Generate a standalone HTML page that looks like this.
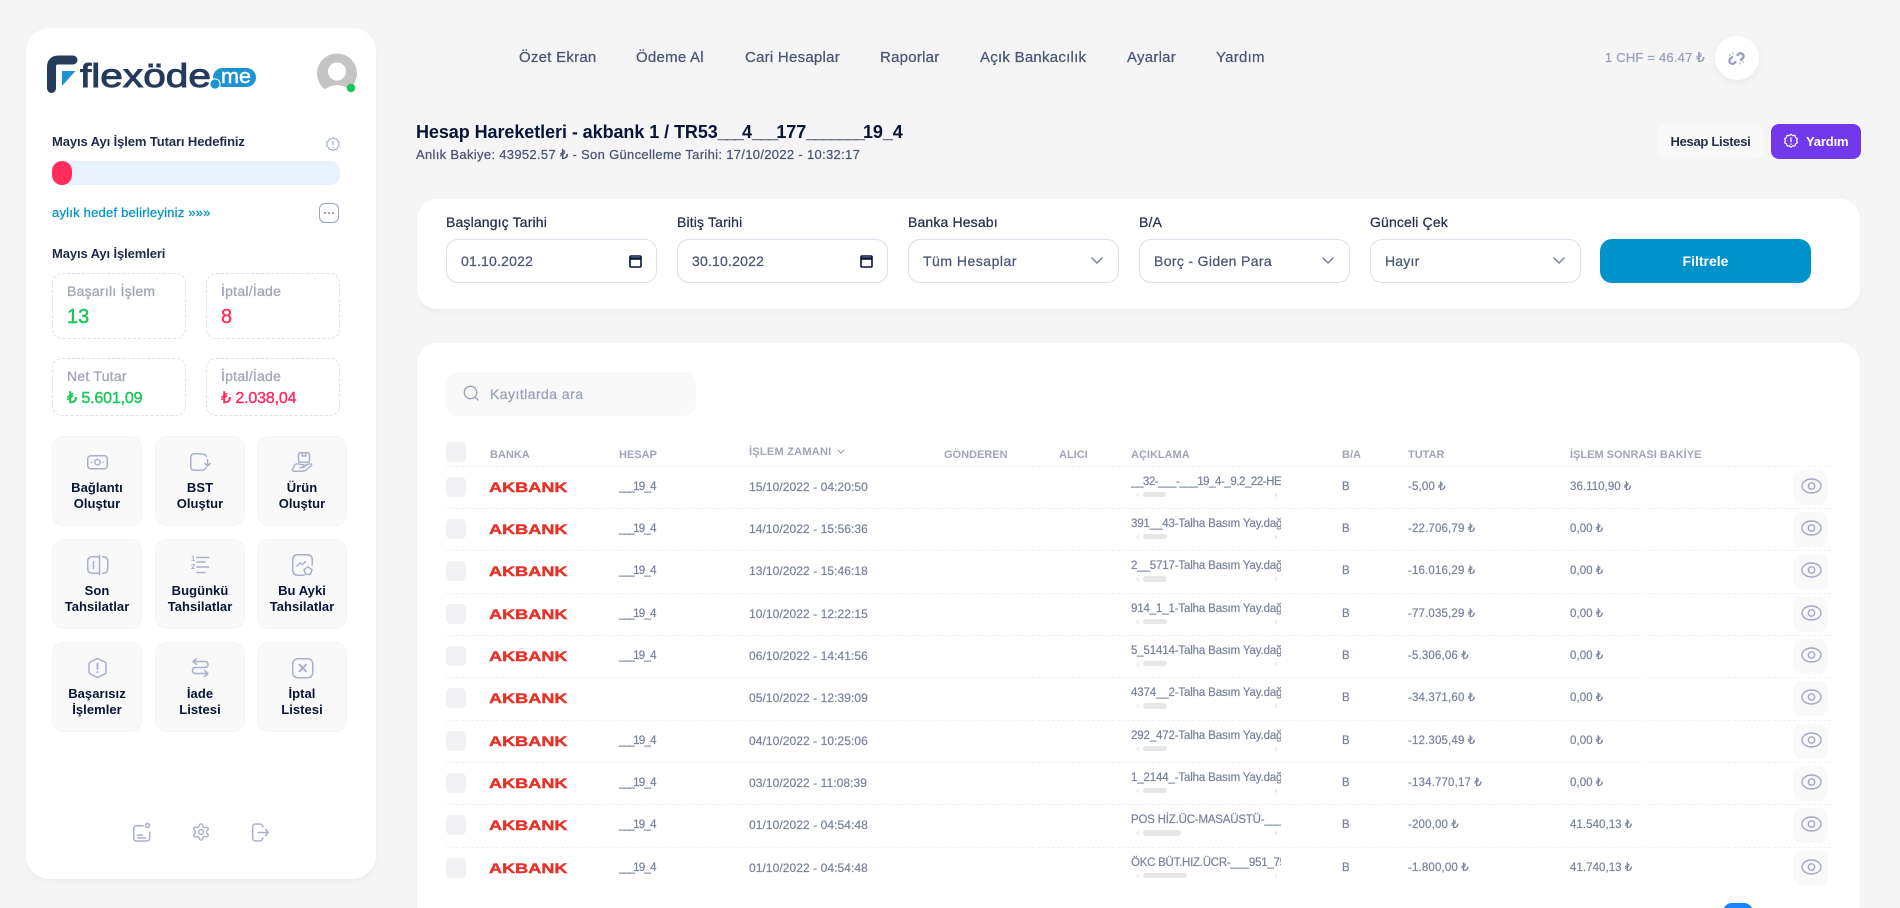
<!DOCTYPE html>
<html lang="tr"><head><meta charset="utf-8"><title>Hesap Hareketleri</title>
<style>
*{box-sizing:border-box;margin:0;padding:0}
html,body{width:1900px;height:908px;overflow:hidden;background:#F5F5F5;font-family:"Liberation Sans","DejaVu Sans",sans-serif;position:relative}
.a{position:absolute;white-space:nowrap}
.m{-webkit-text-stroke:.25px currentColor}
.card{position:absolute;background:#fff;box-shadow:0 3px 4px rgba(0,0,0,.03)}
.n{position:absolute;top:48px;line-height:20px;font-size:15px;color:#4B5675;letter-spacing:.25px;white-space:nowrap;-webkit-text-stroke:.25px currentColor}
.st{position:absolute;border:1px dashed #E0E0EC;border-radius:10px;width:134px}
.sl{position:absolute;left:14px;font-size:14px;color:#A1A5B7;line-height:18px;white-space:nowrap;letter-spacing:.25px;-webkit-text-stroke:.3px currentColor}
.sv{position:absolute;left:14px;white-space:nowrap;line-height:24px;-webkit-text-stroke:.4px currentColor}
.tile{position:absolute;width:90px;height:90px;background:#F9F9F9;border:1px solid #F4F4F6;border-radius:12px;text-align:center;font-size:13px;font-weight:700;line-height:16px;color:#071437;padding-top:43px;letter-spacing:.05px}
.lb{position:absolute;top:213px;font-size:14px;line-height:18px;color:#252F4A;letter-spacing:.15px;white-space:nowrap;-webkit-text-stroke:.25px currentColor}
.inp{position:absolute;top:239px;height:44px;width:211px;border:1px solid #DBDFE9;border-radius:12px;background:#fff;font-size:14px;line-height:42px;padding-left:14px;color:#4B5675;letter-spacing:.2px;-webkit-text-stroke:.25px currentColor}
.th{position:absolute;top:447px;font-size:11px;font-weight:700;line-height:16px;color:#A1A5B7;white-space:nowrap}
.r{position:absolute;left:446px;width:1385px;height:43px;border-top:1px dashed #F1F1F4}
.r>*{position:absolute}
.cb{left:0;top:10px;width:20px;height:20px;background:#F1F1F4;border-radius:5px}
.ak{left:43px;top:15px}
.t{top:0;line-height:40px;font-size:11.5px;color:#78829D;white-space:nowrap;-webkit-text-stroke:.2px currentColor}
.h{left:173px;letter-spacing:-.7px}
.h b{font-weight:400;letter-spacing:-1.7px}
.d{left:303px;font-size:12px;letter-spacing:.07px}
.x{left:685px;top:7px;width:150px;overflow:hidden;white-space:nowrap;font-size:11.5px;line-height:16px;color:#78829D;letter-spacing:-.15px;-webkit-text-stroke:.2px currentColor}
.sb{left:697px;top:25px;height:5.5px;border-radius:3px;background:#E6E6E9}
.la{top:25px;width:0;height:0;border:3px solid transparent}
.ba{left:896px}.tu{left:962px;letter-spacing:.15px}.bk{left:1124px;letter-spacing:.05px}
.eb{left:1347px;top:3px;width:35px;height:35px;background:#F9F9F9;border-radius:9px}
.eb svg{position:absolute;left:8px;top:8px}
.u{letter-spacing:-1.9px}
</style></head><body>

<svg width="0" height="0" style="position:absolute"><symbol id="eye" viewBox="0 0 21 16"><ellipse cx="10.5" cy="8" rx="9.5" ry="7" fill="none" stroke="#A0A8C6" stroke-width="1.4"/><circle cx="10.5" cy="8" r="3.2" fill="none" stroke="#A0A8C6" stroke-width="1.4"/></symbol></svg>

<div class="card" style="left:26px;top:28px;width:350px;height:851px;border-radius:24px"></div>

<svg class="a" style="left:40px;top:45px" width="230" height="60" viewBox="40 45 230 60">
<path d="M51.5 88.5V67Q51.5 60 58.5 60H73" fill="none" stroke="#253B5B" stroke-width="9" stroke-linecap="round"/>
<polygon points="62,71 75.5,71 62,86" fill="#1E93D1"/>
<text x="80" y="87" font-family="Liberation Sans" font-size="33" fill="#253B5B" stroke="#253B5B" stroke-width=".9" textLength="131" lengthAdjust="spacingAndGlyphs">flexöde</text>
<rect x="213" y="68" width="43" height="19" rx="9.5" fill="#1E93D1"/>
<circle cx="215" cy="84" r="5.6" fill="#fff"/>
<circle cx="215" cy="84" r="4.6" fill="#1E93D1"/>
<text x="221" y="83" font-family="Liberation Sans" font-size="20" fill="#fff" stroke="#fff" stroke-width=".4" textLength="30" lengthAdjust="spacingAndGlyphs">me</text>
</svg>

<svg class="a" style="left:315px;top:50px" width="46" height="46" viewBox="315 50 46 46">
<circle cx="337" cy="73.5" r="20" fill="#C4C4C4"/>
<circle cx="337" cy="71.5" r="9" fill="#fff"/>
<path d="M324 90Q337 80 350 90L346 94H328Z" fill="#fff"/>
<circle cx="351" cy="88" r="4.2" fill="#17C653"/>
</svg>

<div class="a" style="left:52px;top:133px;font-size:13px;font-weight:700;line-height:18px;color:#1E2A4A;letter-spacing:-.1px">Mayıs Ayı İşlem Tutarı Hedefiniz</div>
<div class="a" style="left:52px;top:161px;width:288px;height:24px;background:#E8F1FE;border-radius:10px"></div>
<div class="a" style="left:52px;top:161px;width:20px;height:24px;background:#FF2D5B;border-radius:10px"></div>
<div class="a m" style="left:52px;top:204px;font-size:13px;line-height:18px;color:#0093CB;letter-spacing:.22px">aylık hedef belirleyiniz »»»</div>
<div class="a" style="left:319px;top:203px;width:20px;height:20px;border:1.6px solid #98A1C2;border-radius:6px"></div>
<div class="a" style="left:52px;top:245px;font-size:13px;font-weight:700;line-height:18px;color:#1E2A4A;letter-spacing:-.11px">Mayıs Ayı İşlemleri</div>

<div class="st" style="left:52px;top:273px;height:66px"><div class="sl" style="top:8px">Başarılı İşlem</div><div class="sv" style="top:31px;font-size:20px;color:#17C653">13</div></div>
<div class="st" style="left:206px;top:273px;height:66px"><div class="sl" style="top:8px">İptal/İade</div><div class="sv" style="top:31px;font-size:20px;color:#FF2D5B">8</div></div>
<div class="st" style="left:52px;top:358px;height:58px"><div class="sl" style="top:8px">Net Tutar</div><div class="sv" style="top:28px;font-size:16px;color:#17C653;letter-spacing:-.15px">₺ 5.601,09</div></div>
<div class="st" style="left:206px;top:358px;height:58px"><div class="sl" style="top:8px">İptal/İade</div><div class="sv" style="top:28px;font-size:16px;color:#FF2D5B;letter-spacing:-.15px">₺ 2.038,04</div></div>

<div class="tile" style="left:52px;top:436px">Bağlantı<br>Oluştur</div>
<div class="tile" style="left:155px;top:436px">BST<br>Oluştur</div>
<div class="tile" style="left:257px;top:436px">Ürün<br>Oluştur</div>
<div class="tile" style="left:52px;top:539px">Son<br>Tahsilatlar</div>
<div class="tile" style="left:155px;top:539px">Bugünkü<br>Tahsilatlar</div>
<div class="tile" style="left:257px;top:539px">Bu Ayki<br>Tahsilatlar</div>
<div class="tile" style="left:52px;top:642px">Başarısız<br>İşlemler</div>
<div class="tile" style="left:155px;top:642px">İade<br>Listesi</div>
<div class="tile" style="left:257px;top:642px">İptal<br>Listesi</div>

<div class="n" style="left:519px">Özet Ekran</div>
<div class="n" style="left:636px">Ödeme Al</div>
<div class="n" style="left:745px">Cari Hesaplar</div>
<div class="n" style="left:880px">Raporlar</div>
<div class="n" style="left:980px">Açık Bankacılık</div>
<div class="n" style="left:1127px">Ayarlar</div>
<div class="n" style="left:1216px">Yardım</div>

<div class="a m" style="left:1605px;top:49px;font-size:13px;line-height:18px;color:#99A1B7;letter-spacing:.2px">1 CHF = 46.47 ₺</div>
<div class="a" style="left:1715px;top:36px;width:44px;height:44px;background:#fff;border-radius:50%;box-shadow:0 3px 8px rgba(0,0,0,.05)"></div>

<div class="a" style="left:416px;top:121px;font-size:18px;font-weight:700;line-height:22px;color:#071437;letter-spacing:-.07px">Hesap Hareketleri - akbank 1 / TR53<span class="u">___</span>4<span class="u">___</span>177<span class="u">_______</span>19_4</div>
<div class="a m" style="left:416px;top:146px;font-size:13px;line-height:18px;color:#4B5675;letter-spacing:.32px">Anlık Bakiye: 43952.57 ₺ - Son Güncelleme Tarihi: 17/10/2022 - 10:32:17</div>

<div class="a" style="left:1657px;top:124px;width:107px;height:35px;background:#F9F9F9;border-radius:8px;text-align:center;font-size:13px;font-weight:700;line-height:35px;color:#252F4A;letter-spacing:-.3px">Hesap Listesi</div>
<div class="a" style="left:1771px;top:124px;width:90px;height:35px;background:#7239EA;border-radius:8px;font-size:13px;font-weight:700;line-height:35px;color:#fff;padding-left:35px;letter-spacing:-.15px">Yardım</div>

<div class="card" style="left:417px;top:199px;width:1443px;height:110px;border-radius:20px"></div>
<div class="lb" style="left:446px">Başlangıç Tarihi</div>
<div class="lb" style="left:677px">Bitiş Tarihi</div>
<div class="lb" style="left:908px">Banka Hesabı</div>
<div class="lb" style="left:1139px">B/A</div>
<div class="lb" style="left:1370px">Günceli Çek</div>
<div class="inp" style="left:446px">01.10.2022</div>
<div class="inp" style="left:677px">30.10.2022</div>
<div class="inp" style="left:908px;letter-spacing:.5px">Tüm Hesaplar</div>
<div class="inp" style="left:1139px;letter-spacing:.35px">Borç - Giden Para</div>
<div class="inp" style="left:1370px">Hayır</div>
<div class="a" style="left:1600px;top:239px;width:211px;height:44px;background:#0093CB;border-radius:12px;text-align:center;color:#fff;font-size:14px;font-weight:700;line-height:44px">Filtrele</div>

<div class="card" style="left:417px;top:343px;width:1443px;height:600px;border-radius:20px"></div>
<div class="a m" style="left:446px;top:372px;width:250px;height:44px;background:#F9F9F9;border-radius:12px;font-size:14px;line-height:44px;padding-left:44px;color:#99A1B7;letter-spacing:.45px">Kayıtlarda ara</div>

<i class="a" style="left:446px;top:442px;width:20px;height:20px;background:#F1F1F4;border-radius:5px"></i>
<div class="th" style="left:490px">BANKA</div>
<div class="th" style="left:619px">HESAP</div>
<div class="th" style="left:749px;top:444px;letter-spacing:.25px">İŞLEM ZAMANI</div>
<div class="th" style="left:944px">GÖNDEREN</div>
<div class="th" style="left:1059px">ALICI</div>
<div class="th" style="left:1131px">AÇIKLAMA</div>
<div class="th" style="left:1342px">B/A</div>
<div class="th" style="left:1408px">TUTAR</div>
<div class="th" style="left:1570px">İŞLEM SONRASI BAKİYE</div>

<div class="r" style="top:465.5px"><i class="cb"></i><svg class="ak" width="80" height="11"><text x="0" y="10" font-family="Liberation Sans" font-weight="700" font-size="14" fill="#E53329" textLength="78.5" lengthAdjust="spacingAndGlyphs" stroke="#E53329" stroke-width=".4">AKBANK</text></svg><span class="t h"><b>___</b>19_4</span><span class="t d">15/10/2022 - 04:20:50</span><div class="x" style="letter-spacing:-.45px">__32-___-___19_4-_9.2_22-HESAP</div><i class="la" style="left:687px;border-right-color:#EEE"></i><div class="sb" style="width:23px"></div><i class="la" style="left:829px;border-left-color:#EEE"></i><span class="t ba">B</span><span class="t tu">-5,00 ₺</span><span class="t bk">36.110,90 ₺</span><div class="eb"><svg width="21" height="16"><use href="#eye"/></svg></div></div>

<div class="r" style="top:507.8px"><i class="cb"></i><svg class="ak" width="80" height="11"><text x="0" y="10" font-family="Liberation Sans" font-weight="700" font-size="14" fill="#E53329" textLength="78.5" lengthAdjust="spacingAndGlyphs" stroke="#E53329" stroke-width=".4">AKBANK</text></svg><span class="t h"><b>___</b>19_4</span><span class="t d">14/10/2022 - 15:56:36</span><div class="x">391__43-Talha Basım Yay.dağıtım</div><i class="la" style="left:687px;border-right-color:#EEE"></i><div class="sb" style="width:24px"></div><i class="la" style="left:829px;border-left-color:#EEE"></i><span class="t ba">B</span><span class="t tu">-22.706,79 ₺</span><span class="t bk">0,00 ₺</span><div class="eb"><svg width="21" height="16"><use href="#eye"/></svg></div></div>

<div class="r" style="top:550.2px"><i class="cb"></i><svg class="ak" width="80" height="11"><text x="0" y="10" font-family="Liberation Sans" font-weight="700" font-size="14" fill="#E53329" textLength="78.5" lengthAdjust="spacingAndGlyphs" stroke="#E53329" stroke-width=".4">AKBANK</text></svg><span class="t h"><b>___</b>19_4</span><span class="t d">13/10/2022 - 15:46:18</span><div class="x">2__5717-Talha Basım Yay.dağıtım</div><i class="la" style="left:687px;border-right-color:#EEE"></i><div class="sb" style="width:24px"></div><i class="la" style="left:829px;border-left-color:#EEE"></i><span class="t ba">B</span><span class="t tu">-16.016,29 ₺</span><span class="t bk">0,00 ₺</span><div class="eb"><svg width="21" height="16"><use href="#eye"/></svg></div></div>

<div class="r" style="top:592.5px"><i class="cb"></i><svg class="ak" width="80" height="11"><text x="0" y="10" font-family="Liberation Sans" font-weight="700" font-size="14" fill="#E53329" textLength="78.5" lengthAdjust="spacingAndGlyphs" stroke="#E53329" stroke-width=".4">AKBANK</text></svg><span class="t h"><b>___</b>19_4</span><span class="t d">10/10/2022 - 12:22:15</span><div class="x">914_1_1-Talha Basım Yay.dağıtım</div><i class="la" style="left:687px;border-right-color:#EEE"></i><div class="sb" style="width:24px"></div><i class="la" style="left:829px;border-left-color:#EEE"></i><span class="t ba">B</span><span class="t tu">-77.035,29 ₺</span><span class="t bk">0,00 ₺</span><div class="eb"><svg width="21" height="16"><use href="#eye"/></svg></div></div>

<div class="r" style="top:634.8px"><i class="cb"></i><svg class="ak" width="80" height="11"><text x="0" y="10" font-family="Liberation Sans" font-weight="700" font-size="14" fill="#E53329" textLength="78.5" lengthAdjust="spacingAndGlyphs" stroke="#E53329" stroke-width=".4">AKBANK</text></svg><span class="t h"><b>___</b>19_4</span><span class="t d">06/10/2022 - 14:41:56</span><div class="x">5_51414-Talha Basım Yay.dağıtım</div><i class="la" style="left:687px;border-right-color:#EEE"></i><div class="sb" style="width:24px"></div><i class="la" style="left:829px;border-left-color:#EEE"></i><span class="t ba">B</span><span class="t tu">-5.306,06 ₺</span><span class="t bk">0,00 ₺</span><div class="eb"><svg width="21" height="16"><use href="#eye"/></svg></div></div>

<div class="r" style="top:677.2px"><i class="cb"></i><svg class="ak" width="80" height="11"><text x="0" y="10" font-family="Liberation Sans" font-weight="700" font-size="14" fill="#E53329" textLength="78.5" lengthAdjust="spacingAndGlyphs" stroke="#E53329" stroke-width=".4">AKBANK</text></svg><span class="t d">05/10/2022 - 12:39:09</span><div class="x">4374__2-Talha Basım Yay.dağıtım</div><i class="la" style="left:687px;border-right-color:#EEE"></i><div class="sb" style="width:24px"></div><i class="la" style="left:829px;border-left-color:#EEE"></i><span class="t ba">B</span><span class="t tu">-34.371,60 ₺</span><span class="t bk">0,00 ₺</span><div class="eb"><svg width="21" height="16"><use href="#eye"/></svg></div></div>

<div class="r" style="top:719.5px"><i class="cb"></i><svg class="ak" width="80" height="11"><text x="0" y="10" font-family="Liberation Sans" font-weight="700" font-size="14" fill="#E53329" textLength="78.5" lengthAdjust="spacingAndGlyphs" stroke="#E53329" stroke-width=".4">AKBANK</text></svg><span class="t h"><b>___</b>19_4</span><span class="t d">04/10/2022 - 10:25:06</span><div class="x">292_472-Talha Basım Yay.dağıtım</div><i class="la" style="left:687px;border-right-color:#EEE"></i><div class="sb" style="width:24px"></div><i class="la" style="left:829px;border-left-color:#EEE"></i><span class="t ba">B</span><span class="t tu">-12.305,49 ₺</span><span class="t bk">0,00 ₺</span><div class="eb"><svg width="21" height="16"><use href="#eye"/></svg></div></div>

<div class="r" style="top:761.8px"><i class="cb"></i><svg class="ak" width="80" height="11"><text x="0" y="10" font-family="Liberation Sans" font-weight="700" font-size="14" fill="#E53329" textLength="78.5" lengthAdjust="spacingAndGlyphs" stroke="#E53329" stroke-width=".4">AKBANK</text></svg><span class="t h"><b>___</b>19_4</span><span class="t d">03/10/2022 - 11:08:39</span><div class="x">1_2144_-Talha Basım Yay.dağıtım</div><i class="la" style="left:687px;border-right-color:#EEE"></i><div class="sb" style="width:24px"></div><i class="la" style="left:829px;border-left-color:#EEE"></i><span class="t ba">B</span><span class="t tu">-134.770,17 ₺</span><span class="t bk">0,00 ₺</span><div class="eb"><svg width="21" height="16"><use href="#eye"/></svg></div></div>

<div class="r" style="top:804.2px"><i class="cb"></i><svg class="ak" width="80" height="11"><text x="0" y="10" font-family="Liberation Sans" font-weight="700" font-size="14" fill="#E53329" textLength="78.5" lengthAdjust="spacingAndGlyphs" stroke="#E53329" stroke-width=".4">AKBANK</text></svg><span class="t h"><b>___</b>19_4</span><span class="t d">01/10/2022 - 04:54:48</span><div class="x" style="letter-spacing:-.2px">POS HİZ.ÜC-MASAÜSTÜ-_____</div><i class="la" style="left:687px;border-right-color:#EEE"></i><div class="sb" style="width:38px"></div><i class="la" style="left:829px;border-left-color:#EEE"></i><span class="t ba">B</span><span class="t tu">-200,00 ₺</span><span class="t bk">41.540,13 ₺</span><div class="eb"><svg width="21" height="16"><use href="#eye"/></svg></div></div>

<div class="r" style="top:846.5px"><i class="cb"></i><svg class="ak" width="80" height="11"><text x="0" y="10" font-family="Liberation Sans" font-weight="700" font-size="14" fill="#E53329" textLength="78.5" lengthAdjust="spacingAndGlyphs" stroke="#E53329" stroke-width=".4">AKBANK</text></svg><span class="t h"><b>___</b>19_4</span><span class="t d">01/10/2022 - 04:54:48</span><div class="x" style="letter-spacing:-.25px">ÖKC BÜT.HIZ.ÜCR-___951_75___</div><i class="la" style="left:687px;border-right-color:#EEE"></i><div class="sb" style="width:44px"></div><i class="la" style="left:829px;border-left-color:#EEE"></i><span class="t ba">B</span><span class="t tu">-1.800,00 ₺</span><span class="t bk">41.740,13 ₺</span><div class="eb"><svg width="21" height="16"><use href="#eye"/></svg></div></div>

<div class="a" style="left:1723px;top:903px;width:30px;height:30px;background:#1B84FF;border-radius:9px"></div>

<svg class="a" style="left:0;top:0;pointer-events:none" width="1900" height="908" viewBox="0 0 1900 908" fill="none" stroke="#A9B0CC" stroke-width="1.5" stroke-linecap="round" stroke-linejoin="round">
<path d="M333 137.7l1.7 1.4 2.2-.2.6 2.1 1.9 1.2-.8 2 .8 2-1.9 1.2-.6 2.1-2.2-.2-1.7 1.4-1.7-1.4-2.2.2-.6-2.1-1.9-1.2.8-2-.8-2 1.9-1.2.6-2.1 2.2.2z" stroke-width="1.1"/>
<path d="M333 141v3.5M333 147v.2" stroke-width="1.2"/>
<path d="M325 213h.1M329 213h.1M333 213h.1" stroke="#98A1C2" stroke-width="2.2"/>

<rect x="87.75" y="455.75" width="19.5" height="13" rx="3"/><circle cx="97.5" cy="462.2" r="2.7"/><path d="M91.5 462.2h.2M103.3 462.2h.2"/>
<path d="M206.5 456.5C205.5 454.5 203.5 453.75 201 453.75H195C192 453.75 190.75 455 190.75 458V466C190.75 469 192 470.25 195 470.25H201C204 470.25 205.5 469 206 467.5"/><path d="M207.5 459.5V465.5M205 463.5L207.5 466L210 463.5"/>
<rect x="298.5" y="452.75" width="11" height="9.5" rx="2"/><path d="M302.2 453v3h3.6v-3"/><path d="M293.5 468.5c0-3 2-4.7 4-4.7l6 1.1c1.6.3 1.6 2.6-.5 2.6h-3M303.2 466.6l5-2.5c2.2-1 4 .3 3.3 1.5l-6 4.8c-1 .6-2 .8-3 .8h-8.2c-1.6 0-2.3-1.3-1.8-2.4"/>

<path d="M99 556.75H92.5Q87.75 556.75 87.75 561.5V568.5Q87.75 573.25 92.5 573.25H99"/><path d="M93.5 561.5V568.5"/><path d="M99.5 555.5V574.5"/><path d="M102.5 556.75H103Q107.75 556.75 107.75 561.5V568.5Q107.75 573.25 103 573.25H102.5"/>
<path d="M197 557.5h11.5M197 562h8M197 567h11.5M197 572.5h8"/>
<text x="191" y="561" font-family="Liberation Sans" font-weight="700" font-size="7.5" fill="#A9B0CC" stroke="none">1</text>
<text x="191" y="569" font-family="Liberation Sans" font-weight="700" font-size="7.5" fill="#A9B0CC" stroke="none">2</text>
<path d="M304 575.25H298C294 575.25 292.75 573 292.75 570V560C292.75 556 295 554.75 298 554.75H307C311 554.75 312.25 557 312.25 560V565"/><path d="M297 566l3-3 2.5 1.5 3-3"/><path d="M308 566.8l4 2.9-1.5 4.7h-5l-1.5-4.7z"/>

<path d="M97.5 658.5l7 3.4q1.5.8 1.5 2.5v7.2q0 1.7-1.5 2.5l-7 3.4-7-3.4q-1.5-.8-1.5-2.5v-7.2q0-1.7 1.5-2.5z"/><path d="M97.5 663.5v5.5M97.5 672v.2" stroke-width="1.9"/>
<path d="M196.5 658.5L193 661.5L196.5 664.5M193.5 661.5H204.5Q208 661.5 208 664.5Q208 667.5 204.5 667.5H196Q192.5 667.5 192.5 670.5Q192.5 673.5 196 673.5H207.5M204.5 670.5L208 673.5L204.5 676.5"/>
<rect x="292.75" y="658.75" width="20" height="19" rx="5"/><path d="M299.5 664.7l6.5 6.5M306 664.7l-6.5 6.5" stroke-width="2"/>

<path d="M143 825.75H137Q133.75 825.75 133.75 829V838Q133.75 841 137 841H146Q149.75 841 149.75 838V832"/><circle cx="147.5" cy="825.5" r="2"/><path d="M137.5 835h5M137.5 838h8"/>
<g transform="translate(191.4 822.4) scale(.8)" stroke-width="1.8"><path d="M12.22 2h-.44a2 2 0 0 0-2 2v.18a2 2 0 0 1-1 1.73l-.43.25a2 2 0 0 1-2 0l-.15-.08a2 2 0 0 0-2.73.73l-.22.38a2 2 0 0 0 .73 2.73l.15.1a2 2 0 0 1 1 1.72v.51a2 2 0 0 1-1 1.74l-.15.09a2 2 0 0 0-.73 2.73l.22.38a2 2 0 0 0 2.73.73l.15-.08a2 2 0 0 1 2 0l.43.25a2 2 0 0 1 1 1.73V20a2 2 0 0 0 2 2h.44a2 2 0 0 0 2-2v-.18a2 2 0 0 1 1-1.73l.43-.25a2 2 0 0 1 2 0l.15.08a2 2 0 0 0 2.73-.73l.22-.39a2 2 0 0 0-.73-2.73l-.15-.08a2 2 0 0 1-1-1.74v-.5a2 2 0 0 1 1-1.74l.15-.09a2 2 0 0 0 .73-2.73l-.22-.38a2 2 0 0 0-2.73-.73l-.15.08a2 2 0 0 1-2 0l-.43-.25a2 2 0 0 1-1-1.73V4a2 2 0 0 0-2-2z"/><circle cx="12" cy="12" r="3"/></g>
<path d="M263 827Q262 824 259 824H256Q252.75 824 252.75 827V838Q252.75 841 256 841H259Q262 841 263 838"/><path d="M258 832.5H268.5M265.5 829.5l3 3-3 3"/>

<path d="M1737.5 55l1.2-1.2a3 3 0 0 1 4.2 4.2l-1.9 1.9M1735.5 62l-1.2 1.2a3 3 0 0 1-4.2-4.2l1.9-1.9" stroke="#98A1C2" stroke-width="2.4"/>
<path d="M1733 54v-1.5M1730.5 55.5l-1-1M1740 62.5v1.5M1742.5 61l1 1" stroke-width="1.1"/>
<path d="M1791 134.2l1.7 1.4 2.2-.2.6 2.1 1.9 1.2-.8 2 .8 2-1.9 1.2-.6 2.1-2.2-.2-1.7 1.4-1.7-1.4-2.2.2-.6-2.1-1.9-1.2.8-2-.8-2 1.9-1.2.6-2.1 2.2.2z" stroke="#fff" stroke-width="1.2"/>
<path d="M1791 138v3.6M1791 144v.2" stroke="#fff" stroke-width="1.3"/>

<g stroke="#071437" stroke-width="1.6" stroke-linecap="butt">
<rect x="630" y="256" width="11" height="11" rx="1"/><path d="M629.5 258.5h12" stroke-width="2.6"/>
<rect x="861" y="256" width="11" height="11" rx="1"/><path d="M860.5 258.5h12" stroke-width="2.6"/>
</g>
<g stroke="#78829D" stroke-width="1.5">
<path d="M1092 258l5 5 5-5M1323 258l5 5 5-5M1554 258l5 5 5-5"/>
</g>
<circle cx="470.5" cy="392.5" r="6.2" stroke="#99A1B7" stroke-width="1.3"/><path d="M475 397l3 3" stroke="#99A1B7" stroke-width="1.3"/>
<path d="M838 450l3 3 3-3" stroke="#99A1B7" stroke-width="1.2"/>
</svg>
</body></html>
